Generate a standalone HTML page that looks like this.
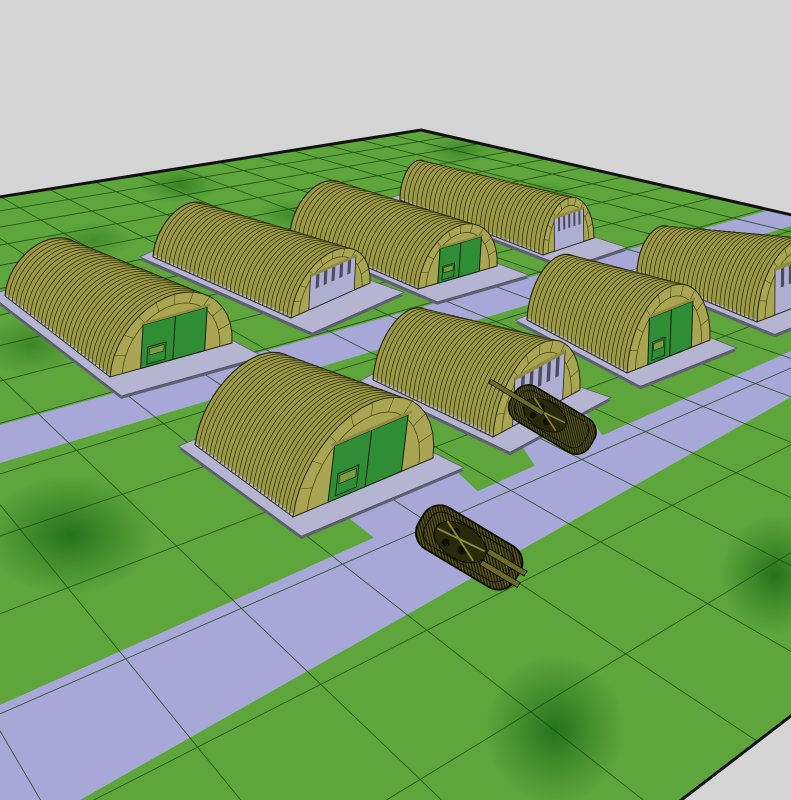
<!DOCTYPE html>
<html><head><meta charset="utf-8"><style>html,body{margin:0;padding:0;background:#d5d5d5;overflow:hidden}svg{display:block}</style></head>
<body>
<svg id="s" width="791" height="800" viewBox="0 0 791 800" xmlns="http://www.w3.org/2000/svg">
<defs>
<clipPath id="gc"><polygon points="421,130 1294,330 100,1246 -700,308"/></clipPath>
<radialGradient id="bl"><stop offset="0" stop-color="#1c6a16" stop-opacity="0.85"/><stop offset="0.5" stop-color="#1c6a16" stop-opacity="0.4"/><stop offset="1" stop-color="#1c6a16" stop-opacity="0"/></radialGradient>
<pattern id="cam" width="4" height="4" patternUnits="userSpaceOnUse"><rect width="4" height="4" fill="#5a5720"/><path d="M0 0L4 4M-1 3L1 5M3 -1L5 1" stroke="#151504" stroke-width="1.3"/></pattern>
</defs>
<rect width="791" height="800" fill="#d5d5d5"/>
<g clip-path="url(#gc)">
<polygon points="421,130 1294,330 100,1246 -700,308" fill="#5ea53c"/>
<ellipse cx="70" cy="535" rx="85" ry="60" fill="url(#bl)"/>
<ellipse cx="555" cy="730" rx="70" ry="75" fill="url(#bl)"/>
<ellipse cx="775" cy="575" rx="55" ry="60" fill="url(#bl)"/>
<ellipse cx="30" cy="345" rx="50" ry="30" fill="url(#bl)" opacity="0.6"/>
<ellipse cx="180" cy="185" rx="40" ry="18" fill="url(#bl)" opacity="0.7"/>
<ellipse cx="95" cy="240" rx="40" ry="18" fill="url(#bl)" opacity="0.5"/>
<ellipse cx="460" cy="150" rx="35" ry="14" fill="url(#bl)" opacity="0.6"/>
<ellipse cx="545" cy="195" rx="35" ry="14" fill="url(#bl)" opacity="0.5"/>
<ellipse cx="290" cy="215" rx="35" ry="16" fill="url(#bl)" opacity="0.5"/>
<polygon points="0,425 791,204 791,226 0,463" fill="#a8a8d8"/>
<polygon points="0,705 791,351 791,397 80,800 0,800" fill="#a8a8d8"/>
<polygon points="345,515 453,468 487,500 378,541" fill="#a8a8d8"/>
<polygon points="505,420 580,405 606,440 535,466" fill="#a8a8d8"/>
<g id="grid" stroke="#1f4a14" stroke-width="0.9" opacity="0.85"></g>
</g>
<polygon points="421,130 1294,330 100,1246 -700,308" fill="none" stroke="#111" stroke-width="3"/>
<g id="hang"></g>
</svg>
<script>
(function(){
var NS="http://www.w3.org/2000/svg";
function el(t,a,p){var e=document.createElementNS(NS,t);for(var k in a)e.setAttribute(k,a[k]);p.appendChild(e);return e;}
var O=[421,130],VU=[-472,-75],VV=[1850,-95],A=-0.0309,B=-0.0207;
function P(u,v){var t=A*u,s=B*v,d=1+t+s;return[(O[0]+t*VU[0]+s*VV[0])/d,(O[1]+t*VU[1]+s*VV[1])/d];}
var g=document.getElementById('grid');
for(var i=0;i<=16;i++){var a=P(i,0),b=P(i,22);el('line',{x1:a[0],y1:a[1],x2:b[0],y2:b[1]},g);}
for(var i=0;i<=22;i++){var a=P(0,i),b=P(16,i);el('line',{x1:a[0],y1:a[1],x2:b[0],y2:b[1]},g);}
function lerp(a,b,t){return[a[0]+(b[0]-a[0])*t,a[1]+(b[1]-a[1])*t];}
function dist(a,b){return Math.hypot(a[0]-b[0],a[1]-b[1]);}
function arch(L,R,T,sw,sh,m){m=m||20;var mid=lerp(L,R,.5);var w=[(R[0]-L[0])/2*sw,(R[1]-L[1])/2*sw];var h=[(T[0]-mid[0])*sh,(T[1]-mid[1])*sh];var p=[];for(var i=0;i<=m;i++){var th=Math.PI*(1-i/m);p.push([mid[0]+w[0]*Math.cos(th)+h[0]*Math.sin(th),mid[1]+w[1]*Math.cos(th)+h[1]*Math.sin(th)]);}return p;}
function ps(p){return p.map(function(q){return q[0].toFixed(1)+','+q[1].toFixed(1);}).join(' ');}
function add(a,b,k){k=k==null?1:k;return[a[0]+b[0]*k,a[1]+b[1]*k];}
var H=document.getElementById('hang');
function hangar(d){
var FL=d.FL,FT=d.FT,FR=d.FR,BL=d.BL,BT=d.BT;
var ax=[FL[0]-BL[0],FL[1]-BL[1]],wv=[FR[0]-FL[0],FR[1]-FL[1]],hv=[FT[0]-FL[0],FT[1]-FL[1]];
var f=dist(BT,BL)/dist(FT,FL);
var BR=add(BL,wv,f),BTa=add(BL,hv,f);
var c1=add(add(BL,ax,-0.05),wv,-0.08),c2=add(add(FL,ax,0.2),wv,-0.08),c3=add(add(FR,ax,0.2),wv,0.08),c4=add(add(BR,ax,-0.05),wv,0.08);
var sl=[c1,c2,c3,c4];
el('polygon',{points:ps(sl.map(function(q){return[q[0],q[1]+3];})),fill:'#5f5f70'},H);
el('polygon',{points:ps(sl),fill:'#b5b5d2',stroke:'#55556a','stroke-width':0.7},H);
var n=Math.max(12,Math.round(dist(BL,FL)/4.5));
for(var k=0;k<n;k++){var lm=k/n;var L=lerp(BL,FL,lm),R=lerp(BR,FR,lm),T=lerp(BTa,FT,lm);var p=arch(L,R,T,1,1,22);
el('polygon',{points:ps(p),fill:'#9c9a47'},H);
el('polyline',{points:ps(p),fill:'none',stroke:'#262608','stroke-width':(k==0?1.2:0.7)},H);}
el('line',{x1:BL[0],y1:BL[1],x2:FL[0],y2:FL[1],stroke:'#333','stroke-width':1},H);
var out=arch(FL,FR,FT,1,1,20),inn=arch(FL,FR,FT,0.8,0.84,20);
el('polygon',{points:ps(out),fill:'#aaa553',stroke:'#262608','stroke-width':1},H);
for(var i=2;i<20;i+=2){el('line',{x1:out[i][0],y1:out[i][1],x2:inn[i][0],y2:inn[i][1],stroke:'#4a4814','stroke-width':0.6},H);}
el('polyline',{points:ps(inn),fill:'none',stroke:'#4a4814','stroke-width':0.8},H);
var mid=lerp(FL,FR,.5),w=[(FR[0]-FL[0])/2,(FR[1]-FL[1])/2],h=[FT[0]-mid[0],FT[1]-mid[1]];
function F(x,y){return[mid[0]+w[0]*x+h[0]*y,mid[1]+w[1]*x+h[1]*y];}
if(d.door=='g'){
el('polygon',{points:ps([F(-0.5,0),F(0.55,0),F(0.55,0.66),F(-0.5,0.66)]),fill:'#2f8d35',stroke:'#10200c','stroke-width':1},H);
el('polygon',{points:ps([F(-0.55,0.66),F(0.6,0.66),F(0.6,0.7),F(-0.55,0.7)]),fill:'#8f8c40'},H);
var a1=F(0.03,0),a2=F(0.03,0.66);el('line',{x1:a1[0],y1:a1[1],x2:a2[0],y2:a2[1],stroke:'#10200c','stroke-width':1},H);
el('polygon',{points:ps([F(-0.4,0.04),F(-0.1,0.04),F(-0.1,0.3),F(-0.4,0.3)]),fill:'none',stroke:'#10200c','stroke-width':0.8},H);
el('polygon',{points:ps([F(-0.37,0.17),F(-0.13,0.17),F(-0.13,0.27),F(-0.37,0.27)]),fill:'#7f9a40',stroke:'#10200c','stroke-width':0.6},H);
}else{
el('polygon',{points:ps([F(-0.55,0),F(0.6,0),F(0.6,0.7),F(-0.55,0.7)]),fill:'#aeaed0',stroke:'#222','stroke-width':0.8},H);
var xs=[-0.4,-0.2,0,0.2,0.4];xs.forEach(function(x){el('polygon',{points:ps([F(x,0.38),F(x+0.08,0.38),F(x+0.08,0.68),F(x,0.68)]),fill:'#4b4b63'},H);});
el('polygon',{points:ps([F(-0.55,0.66),F(0.6,0.66),F(0.6,0.72),F(-0.55,0.72)]),fill:'#8f8c40'},H);
}
}
function tank(cx,cy,sc,rev){
var t=el('g',{transform:'translate('+cx+','+cy+') rotate(31) scale('+sc+')'},H);
el('rect',{x:-60,y:-25,width:118,height:50,rx:20,fill:'url(#cam)',stroke:'#0d0d02','stroke-width':2},t);
el('rect',{x:-52,y:-19,width:100,height:38,rx:14,fill:'url(#cam)',stroke:'#0d0d02','stroke-width':1},t);
el('ellipse',{cx:-12,cy:0,rx:30,ry:18,fill:'#2a290c',stroke:'#0d0d02','stroke-width':1},t);
el('circle',{cx:-22,cy:-6,r:5,fill:'#101004'},t);el('circle',{cx:-6,cy:6,r:5,fill:'#101004'},t);el('circle',{cx:-25,cy:8,r:4,fill:'#101004'},t);
el('path',{d:'M-35 -12 L10 10 M-40 0 L15 -5',stroke:'#8d8a35','stroke-width':2},t);
if(!rev){el('rect',{x:18,y:-10,width:46,height:6,fill:'#6e6b26',stroke:'#0d0d02','stroke-width':1},t);
el('rect',{x:18,y:4,width:46,height:6,fill:'#6e6b26',stroke:'#0d0d02','stroke-width':1},t);}
else{el('rect',{x:-95,y:-4,width:80,height:6,fill:'#6e6b26',stroke:'#0d0d02','stroke-width':1},t);}
}
var hs=[
{FL:[543,255],FT:[568,198],FR:[594,238],BL:[400,200],BT:[420,162],door:'o'},
{FL:[418,289],FT:[461,225],FR:[497,266],BL:[290,234],BT:[323,180],door:'g'},
{FL:[291,318],FT:[333,251],FR:[370,283],BL:[153,257],BT:[187,205],door:'o'},
{FL:[110,377],FT:[175,294],FR:[232,343],BL:[5,296],BT:[40,233],door:'g'},
{FL:[757,322],FT:[797,240],FR:[836,291],BL:[637,273],BT:[660,227],door:'o'},
{FL:[627,373],FT:[671,286],FR:[710,340],BL:[527,320],BT:[567,260],door:'g'},
{FL:[493,437],FT:[540,344],FR:[580,390],BL:[373,380],BT:[400,307],door:'o'}
];
hs.forEach(hangar);
tank(553,420,0.78,true);
hangar({FL:[293,517],FT:[373,402],FR:[433,458],BL:[195,445],BT:[247,350],door:'g'});
tank(470,548,0.95,false);
})();
</script>
</body></html>
